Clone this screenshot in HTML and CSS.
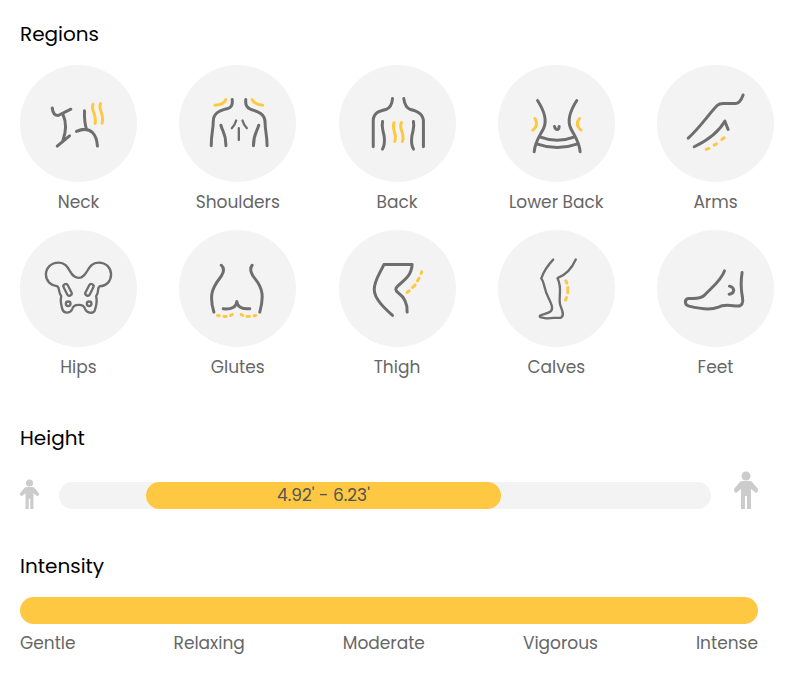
FILE: index.html
```html
<!DOCTYPE html>
<html lang="en">
<head>
  <meta charset="UTF-8" />
  <meta name="viewport" content="width=device-width, initial-scale=1.0" />
  <title>Massage Coverage</title>
  <link rel="stylesheet" href="styles.css">
</head>
<body>

  <!-- REGIONS -->
  <section class="regions">
    <h2>Regions</h2>
    <ul class="region-list">
      <li>
        <svg class="region-icon" viewBox="5 14 352 352" aria-hidden="true">
          <path d="M102 143Q104 166 120 166L158 147M134 162Q150 198 134 241M117 258L154 227M199 152Q198 186 205 207M175 214Q205 200 223 217Q236 230 238 258" />
          <path class="accent" d="M225 132C216 148 236 160 231 190M247 130C239 148 259 160 252 189" />
        </svg>
        <span>Neck</span>
      </li>
      <li>
        <svg class="region-icon" viewBox="5 14 352 352" aria-hidden="true">
          <path d="M165 118Q168 140 152 145C126 151 108 159 108 184C108 210 102 218 102 257M206 118Q203 140 220 147C246 155 264 162 264 188C264 214 270 222 270 257M131 195C136 217 147 220 146 257M245 195C239 218 229 220 229 257" />
          <path class="fine" d="M177 181Q173 196 164 204M196 181Q200 196 209 204M185 204V240" />
          <path class="accent" d="M113 135Q140 134 146 118M225 118Q232 133 257 135" />
        </svg>
        <span>Shoulders</span>
      </li>
      <li>
        <svg class="region-icon" viewBox="5 14 352 352" aria-hidden="true">
          <path d="M166 115Q164 141 146 148C124 153 109 158 108 181V260M200 115Q203 141 220 148C243 153 258 161 259 183V260M136 184C132 205 138 210 141 230Q144 253 136 267M229 184C233 205 227 210 224 230Q221 253 229 267" />
          <path class="accent" d="M171 187C161 207 181 217 173 244M193 187C183 207 204 217 196 244" />
        </svg>
        <span>Back</span>
      </li>
      <li>
        <svg class="region-icon" viewBox="5 14 352 352" aria-hidden="true">
          <path d="M124 121C142 149 154 181 142 205C130 229 116 245 114 275M242 121C224 149 212 181 224 205C236 229 250 245 252 275M133 231Q183 250 233 231M124 252Q183 273 242 252M175 199Q177 208 183 208Q188 208 189 199" />
          <path class="accent" d="M116 175Q129 194 110 210M250 175Q235 194 255 210" />
        </svg>
        <span>Lower Back</span>
      </li>
      <li>
        <svg class="region-icon" viewBox="5 14 352 352" aria-hidden="true">
          <path d="M99 234C135 201 158 165 186 136Q192 130 204 130H240Q255 130 264 104M117 260C154 242 188 220 209 183L219 208" />
          <path class="accent" d="M153 268L161 265M177 255L184 251M200 238L207 233" />
        </svg>
        <span>Arms</span>
      </li>
      <li>
        <svg class="region-icon thin" viewBox="5 11 352 352" aria-hidden="true">
          <path d="M181 155C210 155 206 109 241 109C265 109 279 126 279 145C279 165 264 180 246 180C235 184 245 196 234 210C239 230 233 241 230 253C224 265 205 260 201 249C197 232 166 232 162 249C157 262 138 263 133 251C130 239 125 227 129 210C119 195 125 183 116 180C98 178 83 165 83 145C83 126 98 109 121 109C157 109 152 155 181 155Z" />
          <rect x="141" y="172" width="14" height="38" rx="7" transform="rotate(-27 148 191)" />
          <rect x="207" y="172" width="14" height="38" rx="7" transform="rotate(27 214 191)" />
          <circle cx="150" cy="233" r="7" />
          <circle cx="213" cy="233" r="7" />
        </svg>
        <span>Hips</span>
      </li>
      <li>
        <svg class="region-icon" viewBox="5 11 352 352" aria-hidden="true">
          <path d="M132 117C145 128 137 144 127 157C105 186 95 208 110 258M225 117C216 128 223 146 234 158C257 186 261 211 248 258M138 248C164 250 178 243 179 226C180 241 193 250 218 248" />
          <path class="accent" d="M121 268L126 269M140 271L147 271M160 268L165 265M192 265L197 268M210 271L217 271M231 269L236 268" />
        </svg>
        <span>Glutes</span>
      </li>
      <li>
        <svg class="region-icon" viewBox="5 11 352 352" aria-hidden="true">
          <path d="M166 268C145 249 111 219 111 190C111 164 126 145 140 115H225C223 150 199 164 183 178Q169 190 183 200C201 213 211 231 210 258" />
          <path class="accent" d="M210 199L216 194M226 184L234 176M241 164L246 156M252 142L254 137" />
        </svg>
        <span>Thigh</span>
      </li>
      <li>
        <svg class="region-icon thin" viewBox="5 11 352 352" aria-hidden="true">
          <path d="M171 100C154 118 143 133 135 157C145 167 143 190 156 213C165 232 174 249 162 257C151 264 137 264 131 269C129 276 143 275 155 277C173 273 182 277 194 275C206 269 198 252 193 239C184 215 201 190 184 156C208 147 226 129 239 100" />
          <path class="accent" d="M209 164L212 171M215 184V200M211 214L208 222" />
        </svg>
        <span>Calves</span>
      </li>
      <li>
        <svg class="region-icon" viewBox="5 11 352 352" aria-hidden="true">
          <path d="M208 134C199 162 170 184 148 207C134 221 111 216 100 217C86 219 88 237 101 240C130 247 164 253 187 244C211 231 232 240 248 240Q267 239 262 213Q255 177 261 139M223 180Q235 183 236 192Q234 203 222 204" />
        </svg>
        <span>Feet</span>
      </li>
    </ul>
  </section>

  <!-- HEIGHT -->
  <section class="height">
    <h2>Height</h2>
    <div class="height-row">
      <svg class="person short" viewBox="0 0 24 38" aria-hidden="true">
        <use href="#person" />
      </svg>
      <div class="track">
        <div class="range" style="margin-left: 13.34%; width: 54.45%">4.92' - 6.23'</div>
      </div>
      <svg class="person" viewBox="0 0 24 38" aria-hidden="true">
        <g id="person">
          <circle cx="12" cy="5" r="4.5" />
          <path d="M8 10H16Q18 10 19 12L24 18Q25 20 22 22L17 18V38H13V25H11V38H7V18L2 22Q-1 20 0 18L5 12Q6 10 8 10Z" />
        </g>
      </svg>
    </div>
  </section>

  <!-- INTENSITY -->
  <section class="intensity">
    <h2>Intensity</h2>
    <div class="track full"></div>
    <div class="levels">
      <span>Gentle</span>
      <span>Relaxing</span>
      <span>Moderate</span>
      <span>Vigorous</span>
      <span>Intense</span>
    </div>
  </section>

</body>
</html>
```
FILE: styles.css
```css
* {
  box-sizing: border-box;
}
body {
  margin: 0;
  padding: 19px 42px 36px 20px;
  font-family: Poppins, Inter, sans-serif;
  font-size: 17px;
  line-height: 28px;
  color: #666;
  background: #fff;
}
h2 {
  margin: 0 0 16px;
  font-size: 20px;
  line-height: 30px;
  font-weight: 400;
  color: #000;
}

/* regions */
.region-list {
  display: grid;
  grid-template-columns: repeat(5, 117px);
  justify-content: space-between;
  row-gap: 14px;
  margin: 0 -16px 0 0;
  padding: 0;
  list-style: none;
}
.region-list li {
  display: flex;
  flex-direction: column;
  align-items: center;
  gap: 6px;
}
.region-icon {
  width: 117px;
  height: 117px;
  border-radius: 50%;
  background: #f3f3f3;
  fill: none;
  stroke: #6e6e6e;
  stroke-width: 9;
  stroke-linecap: round;
  stroke-linejoin: round;
}
.region-icon.thin {
  stroke-width: 7;
}
.region-icon .fine {
  stroke-width: 7;
}
.region-icon .accent {
  stroke: #ffc843;
  stroke-width: 9;
}

/* height */
.height {
  margin-top: 42px;
}
.height-row {
  display: flex;
  align-items: flex-end;
  padding-top: 2px;
}
.person {
  flex: none;
  width: 24px;
  height: 38px;
  fill: #ccc;
}
.person.short {
  width: 19px;
  height: 30px;
}
.track {
  flex: 1;
  height: 27px;
  margin: 0 23px 0 20px;
  border-radius: 14px;
  background: #f3f3f3;
}
.range {
  height: 27px;
  border-radius: 14px;
  line-height: 27px;
  text-align: center;
  color: #555;
  background: #ffc843;
}

/* intensity */
.intensity {
  margin-top: 42px;
}
.track.full {
  margin: 0;
  background: #ffc843;
}
.levels {
  display: flex;
  justify-content: space-between;
  margin-top: 5px;
}
```
